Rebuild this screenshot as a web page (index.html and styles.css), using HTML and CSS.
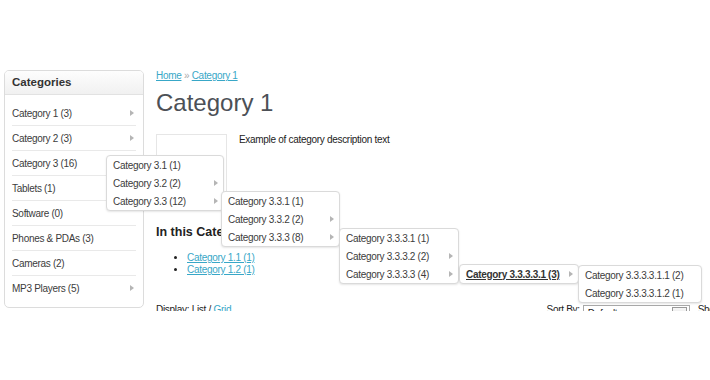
FILE: index.html
```html
<!DOCTYPE html>
<html lang="en">

<head>
  <meta charset="utf-8">
  <title>Category 1</title>
  <link rel="stylesheet" href="styles.css">
</head>

<body>

  <div class="page">

    <aside class="box">
      <h3 class="box-heading">Categories</h3>
      <ul class="box-category">
        <li><a href="#">Category 1 (3)</a><i class="arrow"></i></li>
        <li><a href="#">Category 2 (3)</a><i class="arrow"></i></li>
        <li>
          <a href="#">Category 3 (16)</a><i class="arrow"></i>
          <ul class="flyout level-1">
            <li><a href="#">Category 3.1 (1)</a></li>
            <li><a href="#">Category 3.2 (2)</a><i class="arrow"></i></li>
            <li>
              <a href="#">Category 3.3 (12)</a><i class="arrow"></i>
              <ul class="flyout level-2">
                <li><a href="#">Category 3.3.1 (1)</a></li>
                <li><a href="#">Category 3.3.2 (2)</a><i class="arrow"></i></li>
                <li>
                  <a href="#">Category 3.3.3 (8)</a><i class="arrow"></i>
                  <ul class="flyout level-3">
                    <li><a href="#">Category 3.3.3.1 (1)</a></li>
                    <li><a href="#">Category 3.3.3.2 (2)</a><i class="arrow"></i></li>
                    <li>
                      <a href="#">Category 3.3.3.3 (4)</a><i class="arrow"></i>
                      <ul class="flyout level-4">
                        <li class="current">
                          <a href="#">Category 3.3.3.3.1 (3)</a><i class="arrow"></i>
                          <ul class="flyout level-5">
                            <li><a href="#">Category 3.3.3.3.1.1 (2)</a></li>
                            <li><a href="#">Category 3.3.3.3.1.2 (1)</a></li>
                          </ul>
                        </li>
                      </ul>
                    </li>
                  </ul>
                </li>
              </ul>
            </li>
          </ul>
        </li>
        <li><a href="#">Tablets (1)</a></li>
        <li><a href="#">Software (0)</a></li>
        <li><a href="#">Phones &amp; PDAs (3)</a></li>
        <li><a href="#">Cameras (2)</a></li>
        <li><a href="#">MP3 Players (5)</a><i class="arrow"></i></li>
      </ul>
    </aside>

    <main class="content">
      <p class="breadcrumb">
        <a href="#">Home</a> » <a href="#">Category 1</a>
      </p>
      <h1>Category 1</h1>

      <div class="category-info">
        <div class="thumb"></div>
        <p>Example of category description text</p>
      </div>

      <h2>In this Category</h2>
      <ul class="sub-list">
        <li><a href="#">Category 1.1 (1)</a></li>
        <li><a href="#">Category 1.2 (1)</a></li>
      </ul>

      <div class="product-filter">
        <div class="display">Display: List / <a href="#">Grid</a></div>
        <div class="sort">
          <span>Sort By:</span>
          <div class="select sort-select">Default <span class="select-btn"></span></div>
          <span>Show:</span>
          <div class="select limit-select">15 <span class="select-btn"></span></div>
        </div>
      </div>
    </main>

  </div>

</body>

</html>
```

FILE: styles.css
```css
* {
  box-sizing: border-box;
}

body {
  margin: 0;
  background: #fff;
  color: #333;
  font-family: "Liberation Sans", Arial, sans-serif;
}

a {
  color: #38a7c7;
}

.page {
  display: flex;
  align-items: flex-start;
  gap: 12px;
  height: 311px;
  padding: 70px 0 0 4px;
  overflow: hidden;
}

/* sidebar */
.box {
  position: relative;
  z-index: 10;
  flex: none;
  width: 140px;
  border: 1px solid #dcdcdc;
  border-radius: 5px;
  background: #fff;
}

.box-heading {
  margin: 0;
  height: 24px;
  padding-left: 7px;
  border-bottom: 1px solid #e2e2e2;
  border-radius: 4px 4px 0 0;
  background: linear-gradient(#fdfdfd, #f1f1f1);
  color: #333;
  font-size: 11.5px;
  line-height: 23px;
}

.box-category {
  list-style: none;
  margin: 0;
  padding: 6px 7px 7px;

  li {
    position: relative;
    display: flex;
    justify-content: space-between;
    align-items: center;
    height: 25px;
    padding-right: 2px;
    border-bottom: 1px solid #e9e9e9;
    font-size: 10px;
    letter-spacing: -0.3px;
  }

  li:last-child {
    height: 24px;
    border-bottom: 0;
  }

  a {
    color: #3c3c3c;
    text-decoration: none;
  }
}

.arrow {
  flex: none;
  width: 0;
  height: 0;
  border-left: 4px solid #b5b5b5;
  border-top: 3.5px solid transparent;
  border-bottom: 3.5px solid transparent;
}

/* flyout menus */
.box-category .flyout {
  position: absolute;
  z-index: 20;
  list-style: none;
  margin: 0;
  padding: 0;
  border: 1px solid #dadada;
  border-radius: 4px;
  background: #fff;
  box-shadow: 0 1px 2px rgba(0, 0, 0, 0.1);

  li,
  li:last-child {
    height: 18px;
    padding: 0 5px 0 6px;
    border-bottom: 0;
  }

  .current > a {
    color: #333;
    font-weight: bold;
    text-decoration: underline;
  }
}

.box-category .level-1 {
  top: 4px;
  left: 94px;
  width: 118px;
}

.box-category .level-2 {
  top: -1px;
  left: 114px;
  width: 119px;
}

.box-category .level-3 {
  top: 0;
  left: 117px;
  width: 120px;
}

.box-category .level-4 {
  top: -1px;
  left: 119px;
  width: 120px;
}

.box-category .level-5 {
  top: 0;
  left: 118px;
  width: 124px;
}

/* content */
.content {
  flex: 1;
  min-width: 0;
  font-size: 10px;
  letter-spacing: -0.3px;
  color: #222;
}

.breadcrumb {
  margin: 0;
  color: #aaa;
  line-height: 12px;
}

h1 {
  margin: 7px 0 17px;
  color: #4c5056;
  font-size: 24px;
  font-weight: normal;
  line-height: 28px;
  letter-spacing: 0;
}

.category-info {
  display: flex;
  align-items: flex-start;
  gap: 12px;

  p {
    margin: 0;
    line-height: 12px;
  }
}

.thumb {
  flex: none;
  width: 71px;
  height: 70px;
  border: 1px solid #e6e6e6;
}

h2 {
  margin: 20px 0 0;
  color: #222;
  font-size: 12.5px;
  line-height: 16px;
  letter-spacing: 0;
}

.sub-list {
  margin: 12px 0 0;
  padding-left: 31px;
  line-height: 12px;
}

.product-filter {
  display: flex;
  justify-content: space-between;
  align-items: flex-start;
  width: 621px;
  margin-top: 28px;
  line-height: 12px;
}

.sort {
  display: flex;
  align-items: flex-start;
  gap: 3px;

  span:not(.select-btn) + .select {
    margin-top: 1px;
  }

  .select + span {
    margin-left: 5px;
  }
}

.select {
  display: flex;
  justify-content: space-between;
  align-items: center;
  height: 18px;
  padding: 0 2px 0 4px;
  border: 1px solid #a9a9a9;
  background: #fff;
}

.sort-select {
  width: 107px;
}

.limit-select {
  width: 50px;
}

.select-btn {
  width: 15px;
  height: 14px;
  border: 1px solid #999;
  background: linear-gradient(#f6f6f6, #dedede);
}
```
